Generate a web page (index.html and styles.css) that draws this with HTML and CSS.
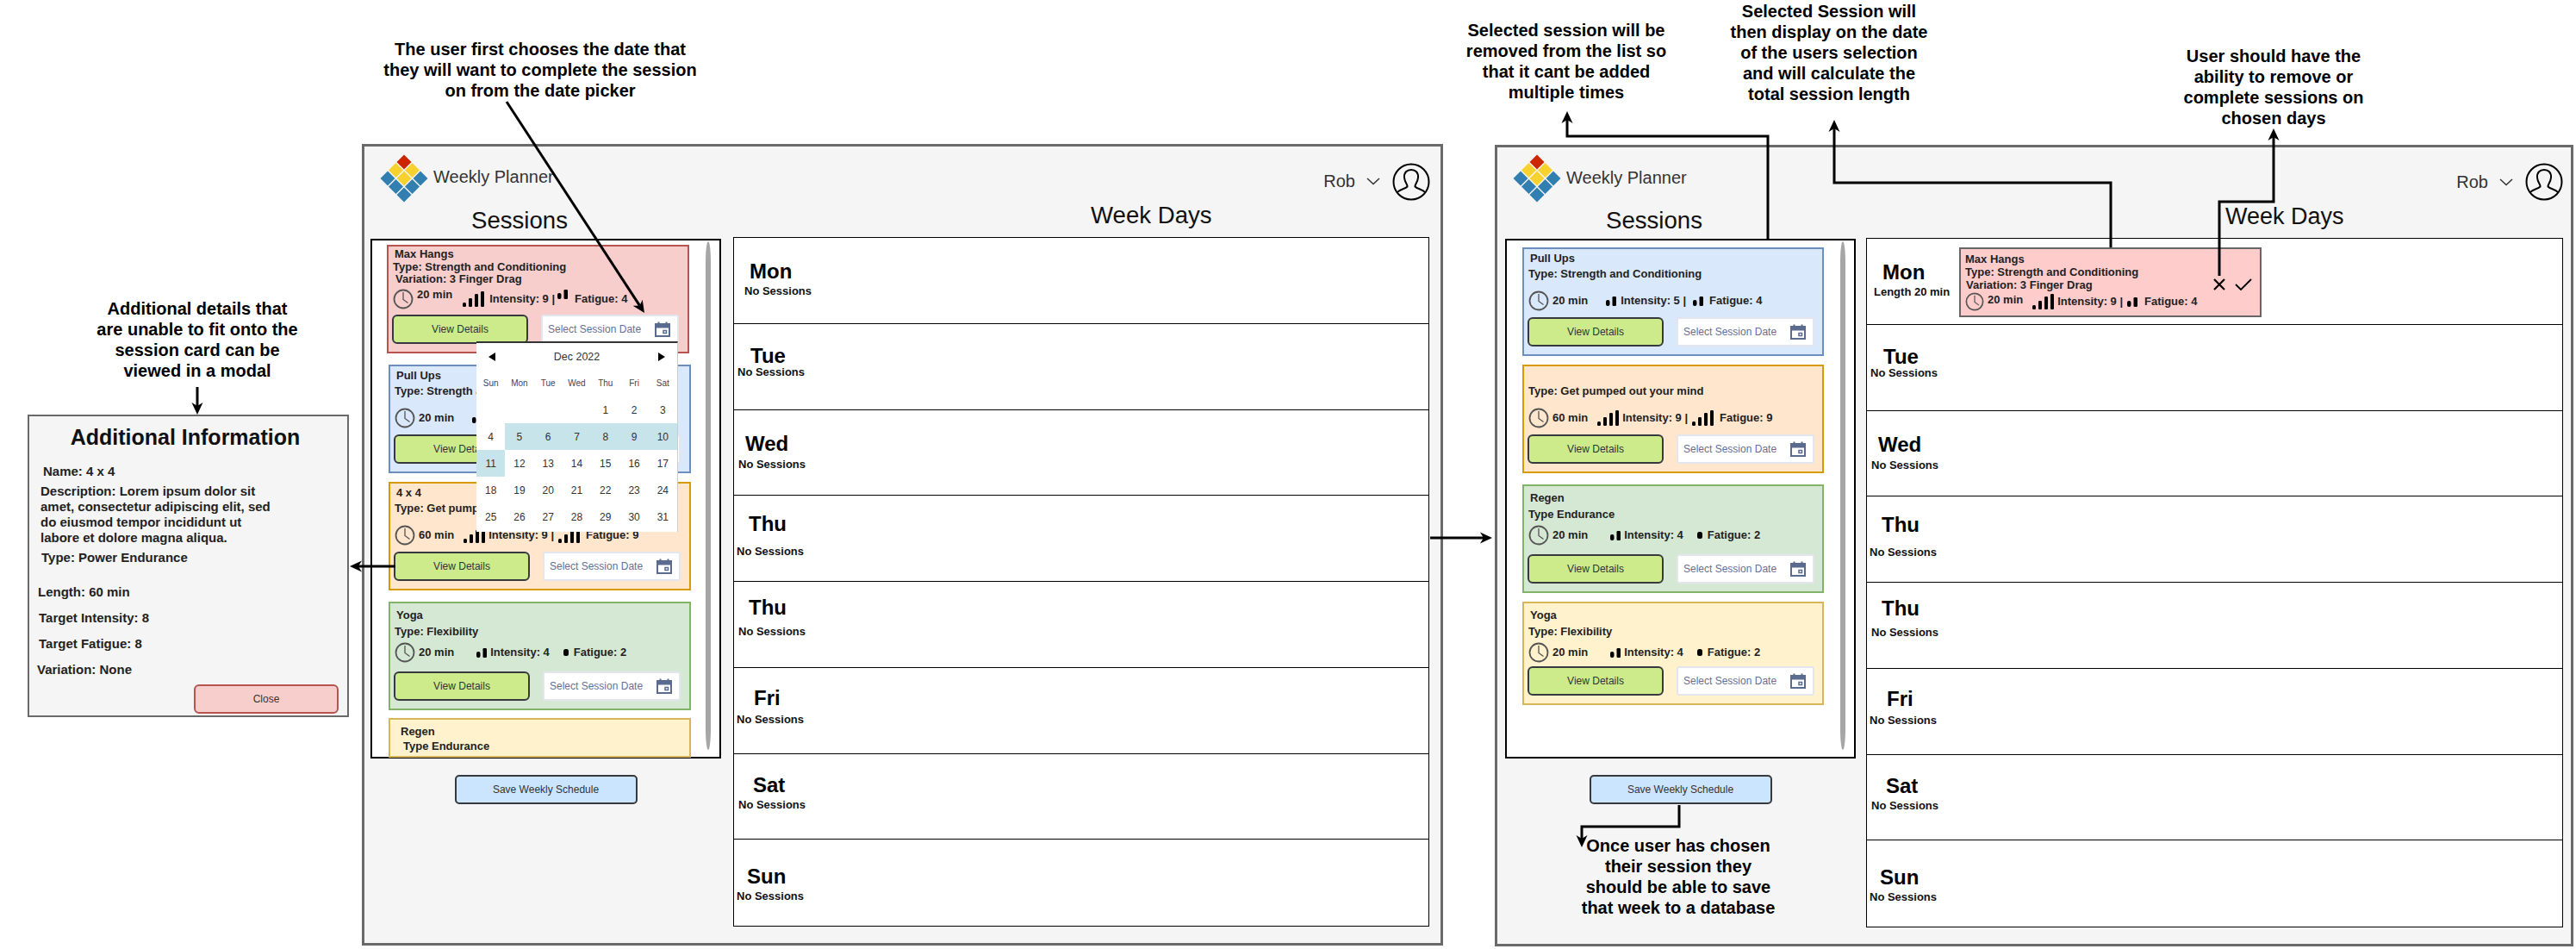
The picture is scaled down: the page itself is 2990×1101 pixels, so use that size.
FILE: index.html
```html
<!DOCTYPE html>
<html lang="en">
<head>
<meta charset="utf-8">
<title>Weekly Planner flow</title>
<link rel="stylesheet" href="styles.css">
</head>
<body>
<svg class="defs" width="0" height="0" aria-hidden="true">
  <symbol id="logo" viewBox="0 0 56 56">
    <path d="M28 0.500l8.500 8.500-8.500 8.500-8.500-8.500z" fill="#cc2600"/>
    <path d="M18.500 10l8.500 8.500-8.500 8.500-8.500-8.500z" fill="#f7d12e"/>
    <path d="M37.500 10l8.500 8.500-8.500 8.500-8.500-8.500z" fill="#f7d12e"/>
    <path d="M28 19.500l8.500 8.500-8.500 8.500-8.500-8.500z" fill="#f7d12e"/>
    <path d="M9 19.500l8.500 8.500-8.500 8.500-8.500-8.500z" fill="#317fb0"/>
    <path d="M47 19.500l8.500 8.500-8.500 8.500-8.500-8.500z" fill="#317fb0"/>
    <path d="M18.500 29l8.500 8.500-8.500 8.500-8.500-8.500z" fill="#317fb0"/>
    <path d="M37.500 29l8.500 8.500-8.500 8.500-8.500-8.500z" fill="#317fb0"/>
    <path d="M28 38.500l8.500 8.500-8.500 8.500-8.500-8.500z" fill="#317fb0"/>
  </symbol>
  <symbol id="clock" viewBox="0 0 24 24">
    <circle cx="12" cy="12" r="10.500" fill="none" stroke="#555" stroke-width="1.800"/>
    <path d="M12 4v8.500l5.500 4" fill="none" stroke="#555" stroke-width="1.300"/>
  </symbol>
  <symbol id="cal" viewBox="0 0 18 18">
    <rect x="1" y="3" width="16" height="14" fill="none" stroke="#5a6b8f" stroke-width="2"/>
    <rect x="1" y="3" width="16" height="4.500" fill="#5a6b8f"/>
    <rect x="3.500" y="0.500" width="2" height="3" fill="#5a6b8f"/>
    <rect x="12.500" y="0.500" width="2" height="3" fill="#5a6b8f"/>
    <rect x="10" y="10.500" width="3.500" height="3" fill="none" stroke="#5a6b8f" stroke-width="1.500"/>
  </symbol>
  <symbol id="sig4" viewBox="0 0 25 18">
    <rect x="0" y="13" width="4" height="5" rx="1.500"/>
    <rect x="7" y="8" width="4" height="10" rx="1.200"/>
    <rect x="14" y="3" width="4" height="15" rx="1.200"/>
    <rect x="21" y="0" width="4" height="18" rx="1.200"/>
  </symbol>
  <symbol id="sig2" viewBox="0 0 12 11">
    <rect x="0" y="4" width="4.500" height="7" rx="2"/>
    <rect x="7.500" y="0" width="4.500" height="11" rx="1.200"/>
  </symbol>
  <symbol id="sig1" viewBox="0 0 6 8">
    <rect x="0" y="0" width="6" height="8" rx="2.500"/>
  </symbol>
  <symbol id="avatar" viewBox="0 0 44 44">
    <circle cx="22" cy="22" r="20.500" fill="none" stroke="#000" stroke-width="2"/>
    <path d="M6 34C9 30 15 30.500 17.500 27.500C18 25 14.500 23 14 17C13.600 11 17 8 22 8C27 8 30.400 11 30 17C29.500 23 26 25 26.500 27.500C29 30.500 35 30 38 34" fill="none" stroke="#000" stroke-width="2"/>
  </symbol>
  <symbol id="chev" viewBox="0 0 16 9">
    <path d="M1 1l7 6.500 7-6.500" fill="none" stroke="#333" stroke-width="1.500"/>
  </symbol>
</svg>

<main class="canvas">

  <!-- Left window -->
  <section class="frame frame--a">
    <header class="head">
      <div class="brand">
        <svg class="logo"><use href="#logo"/></svg>
        <span class="brand-name">Weekly Planner</span>
      </div>
      <div class="user">
        <span class="user-name">Rob</span>
        <svg class="chev"><use href="#chev"/></svg>
        <svg class="avatar"><use href="#avatar"/></svg>
      </div>
    </header>
    <div class="main">
      <div class="col-sessions">
        <h2 class="sec-title sec-sessions">Sessions</h2>
        <div class="list">
          <article class="card card--red card--tight">
            <div class="c-name">Max Hangs</div>
            <div class="c-type">Type: Strength and Conditioning</div>
            <div class="c-var">Variation: 3 Finger Drag</div>
            <div class="stats">
              <svg class="clock"><use href="#clock"/></svg>
              <span class="ml4 up5">20 min</span>
              <svg class="sig4 ml12"><use href="#sig4"/></svg>
              <span class="ml6">Intensity: 9 |</span>
              <svg class="sig2 ml3 up6"><use href="#sig2"/></svg>
              <span class="ml8">Fatigue: 4</span>
            </div>
            <div class="actions">
              <button class="btn-view">View Details</button>
              <div class="date"><span>Select Session Date</span><svg class="cal"><use href="#cal"/></svg></div>
            </div>
          </article>

          <article class="card card--blue ml2 mt13">
            <div class="c-name">Pull Ups</div>
            <div class="c-type">Type: Strength and Conditioning</div>
            <div class="stats">
              <svg class="clock"><use href="#clock"/></svg>
              <span class="ml4">20 min</span>
              <svg class="sig2 ml21"><use href="#sig2"/></svg>
              <span class="ml5">Intensity: 5 |</span>
              <svg class="sig2 ml8"><use href="#sig2"/></svg>
              <span class="ml7">Fatigue: 4</span>
            </div>
            <div class="actions">
              <button class="btn-view">View Details</button>
              <div class="date"><span>Select Session Date</span><svg class="cal"><use href="#cal"/></svg></div>
            </div>
          </article>

          <article class="card card--orange ml2 mt10">
            <div class="c-name">4 x 4</div>
            <div class="c-type">Type: Get pumped out your mind</div>
            <div class="stats">
              <svg class="clock"><use href="#clock"/></svg>
              <span class="ml4">60 min</span>
              <svg class="sig4 ml11"><use href="#sig4"/></svg>
              <span class="ml4">Intensity: 9 |</span>
              <svg class="sig4 ml5"><use href="#sig4"/></svg>
              <span class="ml7">Fatigue: 9</span>
            </div>
            <div class="actions">
              <button class="btn-view">View Details</button>
              <div class="date"><span>Select Session Date</span><svg class="cal"><use href="#cal"/></svg></div>
            </div>
          </article>

          <article class="card card--green card--low ml2 mt13">
            <div class="c-name">Yoga</div>
            <div class="c-type">Type: Flexibility</div>
            <div class="stats">
              <svg class="clock"><use href="#clock"/></svg>
              <span class="ml4">20 min</span>
              <svg class="sig2 ml26"><use href="#sig2"/></svg>
              <span class="ml4">Intensity: 4</span>
              <svg class="sig1 ml16"><use href="#sig1"/></svg>
              <span class="ml6">Fatigue: 2</span>
            </div>
            <div class="actions">
              <button class="btn-view">View Details</button>
              <div class="date"><span>Select Session Date</span><svg class="cal"><use href="#cal"/></svg></div>
            </div>
          </article>

          <article class="card card--yellow card--cut ml2 mt9">
            <div class="c-name c-name--in">Regen</div>
            <div class="c-type c-type--in">Type Endurance</div>
          </article>

          <div class="scrollbar"></div>

          <div class="picker">
            <div class="picker-head">
              <svg class="tri" viewBox="0 0 8 10"><path d="M8 0v10L0 5z"/></svg>
              <span>Dec 2022</span>
              <svg class="tri" viewBox="0 0 8 10"><path d="M0 0v10l8-5z"/></svg>
            </div>
            <div class="picker-grid">
              <span class="wd">Sun</span><span class="wd">Mon</span><span class="wd">Tue</span><span class="wd">Wed</span><span class="wd">Thu</span><span class="wd">Fri</span><span class="wd">Sat</span>
              <span></span><span></span><span></span><span></span><span>1</span><span>2</span><span>3</span>
              <span>4</span><span class="hl">5</span><span class="hl">6</span><span class="hl">7</span><span class="hl">8</span><span class="hl">9</span><span class="hl">10</span>
              <span class="hl">11</span><span>12</span><span>13</span><span>14</span><span>15</span><span>16</span><span>17</span>
              <span>18</span><span>19</span><span>20</span><span>21</span><span>22</span><span>23</span><span>24</span>
              <span>25</span><span>26</span><span>27</span><span>28</span><span>29</span><span>30</span><span>31</span>
            </div>
          </div>
        </div>
        <button class="btn-save">Save Weekly Schedule</button>
      </div>
      <div class="col-week">
        <h2 class="sec-title sec-week">Week Days</h2>
        <div class="week">
          <div class="day d-mon"><div class="day-info"><div class="day-name">Mon</div><div class="day-sub">No Sessions</div></div></div>
          <div class="day d-tue"><div class="day-info"><div class="day-name">Tue</div><div class="day-sub">No Sessions</div></div></div>
          <div class="day d-wed"><div class="day-info"><div class="day-name">Wed</div><div class="day-sub">No Sessions</div></div></div>
          <div class="day d-thu"><div class="day-info"><div class="day-name">Thu</div><div class="day-sub">No Sessions</div></div></div>
          <div class="day d-thu2"><div class="day-info"><div class="day-name">Thu</div><div class="day-sub">No Sessions</div></div></div>
          <div class="day d-fri"><div class="day-info"><div class="day-name">Fri</div><div class="day-sub">No Sessions</div></div></div>
          <div class="day d-sat"><div class="day-info"><div class="day-name">Sat</div><div class="day-sub">No Sessions</div></div></div>
          <div class="day d-sun"><div class="day-info"><div class="day-name">Sun</div><div class="day-sub">No Sessions</div></div></div>
        </div>
      </div>
    </div>
  </section>

  <!-- Right window -->
  <section class="frame frame--b">
    <header class="head">
      <div class="brand">
        <svg class="logo"><use href="#logo"/></svg>
        <span class="brand-name">Weekly Planner</span>
      </div>
      <div class="user">
        <span class="user-name">Rob</span>
        <svg class="chev"><use href="#chev"/></svg>
        <svg class="avatar"><use href="#avatar"/></svg>
      </div>
    </header>
    <div class="main">
      <div class="col-sessions">
        <h2 class="sec-title sec-sessions">Sessions</h2>
        <div class="list">
          <article class="card card--blue">
            <div class="c-name">Pull Ups</div>
            <div class="c-type">Type: Strength and Conditioning</div>
            <div class="stats">
              <svg class="clock"><use href="#clock"/></svg>
              <span class="ml4">20 min</span>
              <svg class="sig2 ml21"><use href="#sig2"/></svg>
              <span class="ml5">Intensity: 5 |</span>
              <svg class="sig2 ml8"><use href="#sig2"/></svg>
              <span class="ml7">Fatigue: 4</span>
            </div>
            <div class="actions">
              <button class="btn-view">View Details</button>
              <div class="date"><span>Select Session Date</span><svg class="cal"><use href="#cal"/></svg></div>
            </div>
          </article>

          <article class="card card--orange mt10">
            <div class="c-name">&nbsp;</div>
            <div class="c-type">Type: Get pumped out your mind</div>
            <div class="stats">
              <svg class="clock"><use href="#clock"/></svg>
              <span class="ml4">60 min</span>
              <svg class="sig4 ml11"><use href="#sig4"/></svg>
              <span class="ml4">Intensity: 9 |</span>
              <svg class="sig4 ml5"><use href="#sig4"/></svg>
              <span class="ml7">Fatigue: 9</span>
            </div>
            <div class="actions">
              <button class="btn-view">View Details</button>
              <div class="date"><span>Select Session Date</span><svg class="cal"><use href="#cal"/></svg></div>
            </div>
          </article>

          <article class="card card--green card--low mt13">
            <div class="c-name">Regen</div>
            <div class="c-type">Type Endurance</div>
            <div class="stats">
              <svg class="clock"><use href="#clock"/></svg>
              <span class="ml4">20 min</span>
              <svg class="sig2 ml26"><use href="#sig2"/></svg>
              <span class="ml4">Intensity: 4</span>
              <svg class="sig1 ml16"><use href="#sig1"/></svg>
              <span class="ml6">Fatigue: 2</span>
            </div>
            <div class="actions">
              <button class="btn-view">View Details</button>
              <div class="date"><span>Select Session Date</span><svg class="cal"><use href="#cal"/></svg></div>
            </div>
          </article>

          <article class="card card--yellow card--low card--short mt10">
            <div class="c-name">Yoga</div>
            <div class="c-type">Type: Flexibility</div>
            <div class="stats">
              <svg class="clock"><use href="#clock"/></svg>
              <span class="ml4">20 min</span>
              <svg class="sig2 ml26"><use href="#sig2"/></svg>
              <span class="ml4">Intensity: 4</span>
              <svg class="sig1 ml16"><use href="#sig1"/></svg>
              <span class="ml6">Fatigue: 2</span>
            </div>
            <div class="actions">
              <button class="btn-view">View Details</button>
              <div class="date"><span>Select Session Date</span><svg class="cal"><use href="#cal"/></svg></div>
            </div>
          </article>

          <div class="scrollbar"></div>
        </div>
        <button class="btn-save">Save Weekly Schedule</button>
      </div>
      <div class="col-week">
        <h2 class="sec-title sec-week">Week Days</h2>
        <div class="week">
          <div class="day d-mon">
            <div class="day-info day-info--mon"><div class="day-name">Mon</div><div class="day-sub day-sub--len">Length 20 min</div></div>
            <article class="selected">
              <div class="sel-body">
                <div class="c-name">Max Hangs</div>
                <div class="c-type">Type: Strength and Conditioning</div>
                <div class="c-var">Variation: 3 Finger Drag</div>
                <div class="stats">
                  <svg class="clock"><use href="#clock"/></svg>
                  <span class="ml4 up2">20 min</span>
                  <svg class="sig4 ml11"><use href="#sig4"/></svg>
                  <span class="ml4">Intensity: 9 |</span>
                  <svg class="sig2 ml5"><use href="#sig2"/></svg>
                  <span class="ml8">Fatigue: 4</span>
                </div>
              </div>
              <div class="sel-icons">
                <svg class="ic-x" viewBox="0 0 14 14"><path d="M1 1l12 12M13 1L1 13" fill="none" stroke="#000" stroke-width="2.200"/></svg>
                <svg class="ic-check" viewBox="0 0 20 14"><path d="M1 7l6 6L19 1" fill="none" stroke="#000" stroke-width="1.800"/></svg>
              </div>
            </article>
          </div>
          <div class="day d-tue"><div class="day-info"><div class="day-name">Tue</div><div class="day-sub">No Sessions</div></div></div>
          <div class="day d-wed"><div class="day-info"><div class="day-name">Wed</div><div class="day-sub">No Sessions</div></div></div>
          <div class="day d-thu"><div class="day-info"><div class="day-name">Thu</div><div class="day-sub">No Sessions</div></div></div>
          <div class="day d-thu2"><div class="day-info"><div class="day-name">Thu</div><div class="day-sub">No Sessions</div></div></div>
          <div class="day d-fri"><div class="day-info"><div class="day-name">Fri</div><div class="day-sub">No Sessions</div></div></div>
          <div class="day d-sat"><div class="day-info"><div class="day-name">Sat</div><div class="day-sub">No Sessions</div></div></div>
          <div class="day d-sun"><div class="day-info"><div class="day-name">Sun</div><div class="day-sub">No Sessions</div></div></div>
        </div>
      </div>
    </div>
  </section>

  <!-- Modal -->
  <aside class="modal">
    <h3 class="modal-title">Additional Information</h3>
    <div class="m-name">Name: 4 x 4</div>
    <div class="m-desc">Description: Lorem ipsum dolor sit<br>amet, consectetur adipiscing elit, sed<br>do eiusmod tempor incididunt ut<br>labore et dolore magna aliqua.</div>
    <div class="m-type">Type: Power Endurance</div>
    <div class="m-len">Length: 60 min</div>
    <div class="m-row m-row--t">Target Intensity: 8</div>
    <div class="m-row m-row--t">Target Fatigue: 8</div>
    <div class="m-row m-row--v">Variation: None</div>
    <button class="btn-close">Close</button>
  </aside>

  <!-- Annotations -->
  <p class="note note-date">The user first chooses the date that<br>they will want to complete the session<br>on from the date picker</p>
  <p class="note note-modal">Additional details that<br>are unable to fit onto the<br>session card can be<br>viewed in a modal</p>
  <p class="note note-removed">Selected session will be<br>removed from the list so<br>that it cant be added<br>multiple times</p>
  <p class="note note-display">Selected Session will<br>then display on the date<br>of the users selection<br>and will calculate the<br>total session length</p>
  <p class="note note-remove">User should have the<br>ability to remove or<br>complete sessions on<br>chosen days</p>
  <p class="note note-save">Once user has chosen<br>their session they<br>should be able to save<br>that week to a database</p>

  <!-- Connectors -->
  <svg class="wires" viewBox="0 0 2990 1101">
    <defs>
      <marker id="head" markerUnits="userSpaceOnUse" markerWidth="14" markerHeight="14" viewBox="0 0 14 14" refX="4" refY="7" orient="auto">
        <path d="M0 0.500L14 7L0 13.500L4 7z"/>
      </marker>
    </defs>
    <g fill="none" stroke="#000" stroke-width="3" marker-end="url(#head)">
      <path d="M588 118L742.500 354.600"/>
      <path d="M229 449V471"/>
      <path d="M459 657H416"/>
      <path d="M1660 624H1722"/>
      <path d="M2052 277V158H1819V139"/>
      <path d="M2450 287V212H2129V149"/>
      <path d="M2576 320V234H2639V159"/>
      <path d="M1949 934V959H1836V973"/>
    </g>
  </svg>
</main>
</body>
</html>
```

FILE: styles.css
```css
* { box-sizing: border-box; }

html, body {
  margin: 0;
  padding: 0;
  background: #fff;
}

body {
  font-family: "Liberation Sans", Arial, sans-serif;
  color: #111;
  overflow: hidden;
}

.defs { position: absolute; }

.canvas {
  position: relative;
  width: 2990px;
  height: 1101px;
  overflow: hidden;
}

/* windows on the canvas */
.frame {
  position: absolute;
  border: 3px solid #6a6a6a;
  background: #f5f5f5;
}
.frame--a { left: 420px; top: 167px; width: 1255px; height: 930px; }
.frame--b { left: 1735px; top: 168px; width: 1252px; height: 930px; }

.head {
  display: flex;
  justify-content: space-between;
  align-items: center;
  height: 70px;
  padding: 3px 12px 0 18px;
}
.frame--b .head { height: 69px; padding-right: 9px; }

.brand, .user { display: flex; align-items: center; }
.user { margin-top: 8px; }
.logo { width: 56px; height: 56px; }
.brand-name { margin: -2px 0 0 6px; font-size: 20px; color: #333; }

.user-name { font-size: 20px; color: #333; }
.chev { width: 16px; height: 9px; margin: 0 14px 0 13px; }
.avatar { width: 44px; height: 44px; }

.main {
  display: grid;
  grid-template-columns: 407px 808px;
  column-gap: 14px;
  padding-left: 7px;
}
.frame--b .main {
  grid-template-columns: 407px 809px;
  column-gap: 12px;
  padding-left: 9px;
}

.sec-title {
  margin: 0;
  font-size: 27.600px;
  font-weight: 400;
  line-height: 30px;
  color: #111;
}
.sec-sessions { height: 37px; padding: 1px 0 0 117px; }
.sec-week { height: 35px; margin: -5px 0 5px; padding-left: 415px; }
.frame--b .sec-week { height: 36px; margin: -4px 0 4px; padding-left: 417px; font-size: 27px; }

/* session list */
.list {
  position: relative;
  height: 603px;
  border: 2px solid #000;
  background: #fff;
  padding: 5px 0 0 17px;
}
.frame--b .list { padding: 8px 0 0 18px; }

.card {
  display: flex;
  flex-direction: column;
  width: 351px;
  height: 126px;
  border: 2px solid;
  padding: 2px 0 9px 4px;
  font-size: 13px;
  font-weight: 700;
  line-height: 18px;
  color: #222;
}
.frame--b .card { width: 350px; }

.card--red { background: #f8cecc; border-color: #b85450; }
.card--blue { background: #dae8fc; border-color: #6c8ebf; }
.card--orange { background: #ffe6cc; border-color: #d79b00; }
.card--green { background: #d5e8d4; border-color: #82b366; }
.card--yellow { background: #fff2cc; border-color: #d6b656; }

.card--tight { line-height: 14.500px; }
.card--low { line-height: 19px; padding-top: 4px; }
.card--low .stats { margin-top: 3px; }
.card--short { height: 120px; }
.card--cut { height: 46px; line-height: 17px; padding-top: 5px; }

.ml2 { margin-left: 2px; }
.mt9 { margin-top: 9px; }
.mt10 { margin-top: 10px; }
.mt13 { margin-top: 13px; }

.c-name { margin-left: 3px; }
.c-type { margin-left: 1px; }
.c-var { margin-left: 4px; }
.c-name--in { margin-left: 8px; }
.c-type--in { margin-left: 11px; }

.stats {
  display: flex;
  align-items: center;
  height: 24px;
  margin-top: 10px;
  margin-left: 1px;
  white-space: nowrap;
  line-height: 16px;
}
.card--tight .stats { margin-top: 3px; }

.clock { width: 24px; height: 24px; flex: none; }
.sig4 { width: 25px; height: 18px; flex: none; }
.sig2 { width: 12px; height: 11px; flex: none; }
.sig1 { width: 6px; height: 8px; flex: none; }

.ml3 { margin-left: 3px; }
.ml4 { margin-left: 4px; }
.ml5 { margin-left: 5px; }
.ml6 { margin-left: 6px; }
.ml7 { margin-left: 7px; }
.ml8 { margin-left: 8px; }
.ml11 { margin-left: 11px; }
.ml12 { margin-left: 12px; }
.ml16 { margin-left: 16px; }
.ml21 { margin-left: 21px; }
.ml26 { margin-left: 26px; }
.up2 { margin-top: -4px; }
.up5 { margin-top: -10px; }
.up6 { margin-top: -10px; }

.actions {
  display: flex;
  align-items: center;
  gap: 15px;
  margin-top: auto;
}

.btn-view {
  width: 158px;
  height: 34px;
  padding: 0;
  border: 2px solid #36393d;
  border-radius: 6px;
  background: #cdeb8b;
  font: 12px "Liberation Sans", Arial, sans-serif;
  color: #333;
}

.date {
  display: flex;
  justify-content: space-between;
  align-items: center;
  width: 160px;
  height: 34px;
  padding: 0 8px 0 6px;
  border: 2px solid #e3e6ef;
  border-radius: 3px;
  background: #fff;
  font-size: 12px;
  font-weight: 400;
  color: #667090;
}
.cal { width: 18px; height: 18px; }

.scrollbar {
  position: absolute;
  left: 387px;
  top: 1px;
  width: 6px;
  height: 590px;
  border-radius: 50% / 24px;
  background: #a6a6a6;
}

/* date picker popup */
.picker {
  position: absolute;
  left: 121px;
  top: 117px;
  width: 234px;
  height: 221px;
  border-top: 2px solid #333;
  border-right: 1px solid #ccc;
  background: #fff;
  font-size: 12px;
  color: #333;
}
.picker-head {
  display: flex;
  justify-content: space-between;
  align-items: center;
  height: 31px;
  padding: 0 14px;
  font-size: 12.500px;
}
.tri { width: 8px; height: 10px; }
.picker-grid {
  display: grid;
  grid-template-columns: repeat(7, 1fr);
  grid-auto-rows: 31.100px;
}
.picker-grid span {
  display: flex;
  align-items: center;
  justify-content: center;
}
.picker-grid .wd { font-size: 10px; color: #445; }
.picker-grid .hl { background: #c6e4ea; }

.btn-save {
  display: block;
  width: 212px;
  height: 34px;
  margin: 19px auto 0;
  padding: 0;
  border: 2px solid #36393d;
  border-radius: 5px;
  background: #cce5ff;
  font: 12px "Liberation Sans", Arial, sans-serif;
  color: #333;
}

/* week table */
.week {
  display: grid;
  grid-template-rows: repeat(8, 1fr);
  height: 800px;
  border: 1px solid #000;
  background: #fff;
}
.day {
  display: flex;
  min-height: 0;
  border-bottom: 1px solid #000;
}
.day:last-child { border-bottom: 0; }

.day-info { flex: none; width: 107px; }
.day-name {
  font-size: 24px;
  font-weight: 700;
  line-height: 26px;
  color: #000;
}
.day-sub {
  font-size: 13px;
  font-weight: 700;
  line-height: 16px;
  color: #111;
  white-space: nowrap;
}

.d-mon .day-info { padding-top: 26px; }
.d-mon .day-name { margin-left: 18px; }
.d-mon .day-sub { margin: 2px 0 0 12px; }
.d-mon .day-sub--len { margin-left: 8px; }

.d-tue .day-info { padding-top: 24px; }
.d-tue .day-name { margin-left: 19px; }
.d-tue .day-sub { margin: -2px 0 0 4px; }

.d-wed .day-info { padding-top: 26.500px; }
.d-wed .day-name { margin-left: 13px; }
.d-wed .day-sub { margin: 3px 0 0 5px; }

.d-thu .day-info { padding-top: 20px; }
.d-thu .day-name { margin-left: 17px; }
.d-thu .day-sub { margin: 11px 0 0 3px; }

.d-thu2 .day-info { padding-top: 16.500px; }
.d-thu2 .day-name { margin-left: 17px; }
.d-thu2 .day-sub { margin: 7px 0 0 5px; }

.d-fri .day-info { padding-top: 22.500px; }
.d-fri .day-name { margin-left: 23px; }
.d-fri .day-sub { margin: 4px 0 0 3px; }

.d-sat .day-info { padding-top: 23px; }
.d-sat .day-name { margin-left: 22px; }
.d-sat .day-sub { margin: 2px 0 0 5px; }

.d-sun .day-info { padding-top: 30px; }
.d-sun .day-name { margin-left: 15px; }
.d-sun .day-sub { margin: 2px 0 0 3px; }

/* scheduled session */
.selected {
  display: flex;
  align-items: center;
  flex: none;
  width: 351px;
  height: 81px;
  margin-top: 10px;
  padding: 0 9px 0 5px;
  border: 2px solid #666;
  background: #ffcccc;
  font-size: 13px;
  font-weight: 700;
  line-height: 15px;
  color: #222;
}
.selected .c-name, .selected .c-type { margin-left: 0; }
.selected .c-var { margin-left: 1px; }
.selected .stats { margin: 0; }
.selected .clock { width: 22px; height: 22px; }
.sel-icons {
  display: flex;
  align-items: center;
  gap: 11px;
  margin: 5px 0 0 auto;
}
.ic-x { width: 14px; height: 14px; }
.ic-check { width: 20px; height: 14px; }

/* modal */
.modal {
  position: absolute;
  left: 32px;
  top: 481px;
  display: flex;
  flex-direction: column;
  width: 373px;
  height: 351px;
  padding-top: 9px;
  border: 2px solid #6a6a6a;
  background: #f5f5f5;
  font-size: 15px;
  font-weight: 700;
  line-height: 18px;
  color: #222;
}
.modal-title {
  margin: 0;
  padding-right: 7px;
  font-size: 25px;
  line-height: 30px;
  text-align: center;
  color: #111;
}
.m-name { margin: 16px 0 0 16px; }
.m-desc { margin: 5px 0 0 13px; }
.m-type { margin: 5px 0 0 14px; }
.m-len { margin: 22px 0 0 10px; }
.m-row { margin-top: 12px; }
.m-row--t { margin-left: 11px; }
.m-row--v { margin-left: 9px; }

.btn-close {
  align-self: flex-end;
  width: 168px;
  height: 34px;
  margin: 8px 10px 0 0;
  padding: 0;
  border: 2px solid #b85450;
  border-radius: 6px;
  background: #f8cecc;
  font: 12px "Liberation Sans", Arial, sans-serif;
  color: #333;
}

/* annotations */
.note {
  position: absolute;
  width: 440px;
  margin: 0;
  font-size: 20px;
  font-weight: 700;
  line-height: 24px;
  text-align: center;
  color: #000;
}
.note-date { left: 407px; top: 45px; }
.note-modal { left: 9px; top: 346px; }
.note-removed { left: 1598px; top: 23px; }
.note-display { left: 1903px; top: 1px; }
.note-remove { left: 2419px; top: 53px; }
.note-save { left: 1728px; top: 969px; }

.wires {
  position: absolute;
  left: 0;
  top: 0;
  width: 2990px;
  height: 1101px;
  pointer-events: none;
}
```
